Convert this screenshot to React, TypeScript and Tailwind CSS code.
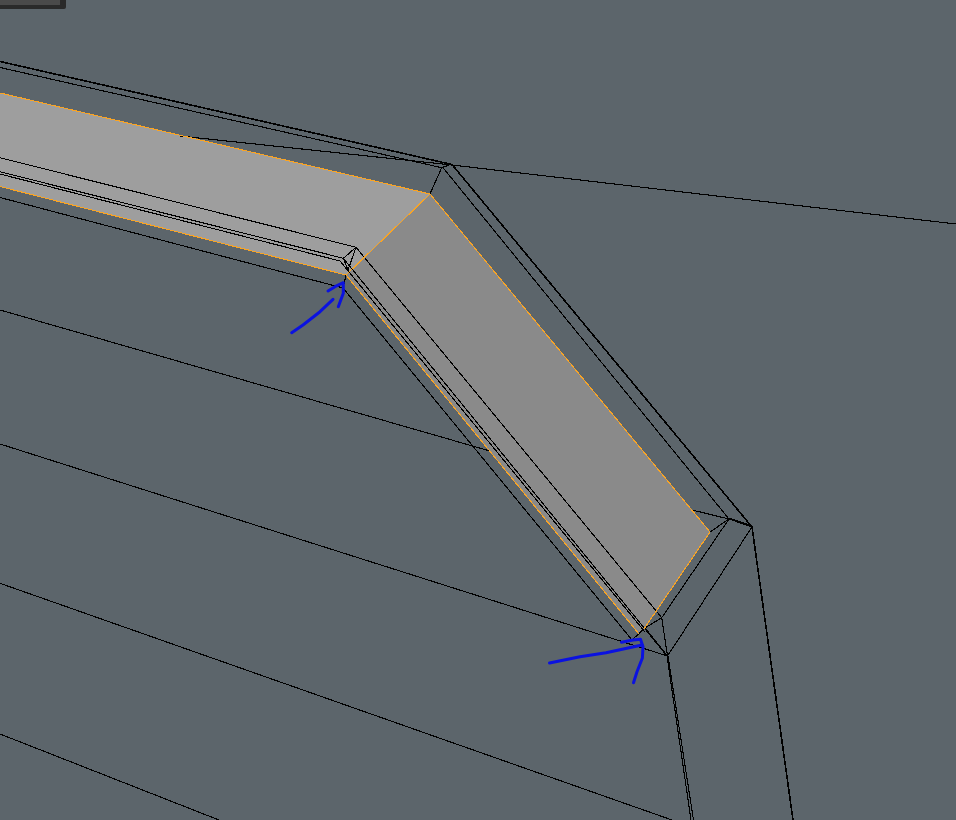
const thin: number[][] = [
  // top edge loop
  [0, 67.5, 441.7, 167.7],
  [180, 136, 452, 165],
  [452, 165, 956, 224],
  [441.7, 167.7, 452, 164],
  [441.7, 167.7, 430, 194],
  [443, 167.7, 729, 519],
  // strip inner lines
  [0, 157.7, 356, 247.3],
  [0, 171.7, 343.3, 258.3],
  [0, 174, 340, 261],
  [0, 197.5, 343, 288],
  [343, 288, 632, 640],
  [356, 247.3, 343.3, 258.3],
  [356, 247.3, 348, 270],
  [343.3, 258.3, 348, 270],
  [346, 275, 343, 288],
  // inner lines of the second segment
  [356, 247.3, 661.7, 617.7],
  [343.3, 258.3, 667, 656],
  [340, 261, 645, 632],
  // far corner
  [692, 510, 729, 519],
  [729, 519, 752, 527],
  [729, 518, 752, 526],
  [729, 519, 710, 532],
  [729, 519, 661.7, 617.7],
  [661.7, 617.7, 667.5, 656],
  [661.7, 617.7, 645, 628],
  [645, 628, 632, 640],
  [645, 628, 667.5, 656],
  [752, 527, 667.5, 656],
  [667, 656, 691, 820],
  [668, 656, 693.5, 820],
  // long edges running off the page
  [0, 310, 490, 451],
  [0, 444, 667.5, 656],
  [0, 583.3, 672, 820],
  [0, 734, 219, 820],
];

const thick: number[][] = [
  [0, 61.5, 452, 164.5],
  [452, 164.5, 752, 527],
  [752, 527, 793, 820],
];

const orange: number[][] = [
  [0, 93, 430, 194],
  [0, 186.5, 346, 275],
  [430, 194, 346, 275],
  [430, 194, 710, 532],
  [710, 532, 644, 629],
  [346, 275, 639, 634],
];

const arrows = [
  "M291.7 332.7 L303 325 L320 311.7 L333 299.3",
  "M328 291 L335 286.7 L343.3 282.7 L343.3 293.3 L338.3 306.7",
  "M549.5 663 L580 656.7 L606 652.7 L642 645",
  "M621.5 642.3 L633 640 L640.5 639.3 L643 646.7 L642.4 658 L637 671.7 L633.5 682.7",
];

function Edges({ lines, color, width }: { lines: number[][]; color: string; width: number }) {
  return (
    <g stroke={color} strokeWidth={width} shapeRendering="crispEdges">
      {lines.map((l, i) => (
        <line key={i} x1={l[0]} y1={l[1]} x2={l[2]} y2={l[3]} />
      ))}
    </g>
  );
}

export default function App() {
  return (
    <div className="relative h-[820px] w-full overflow-hidden bg-[#5c656b]">
      <svg className="block h-full w-full" viewBox="0 0 956 820">
        <polygon points="0,93 430,194 346,275 0,186.5" fill="#9e9e9e" shapeRendering="crispEdges" />
        <polygon points="430,194 710,532 644,629 639,634 346,275" fill="#8a8a8a" shapeRendering="crispEdges" />
        <Edges lines={thin} color="#000000" width={1.1} />
        <Edges lines={thick} color="#000000" width={1.6} />
        <Edges lines={orange} color="#f9a425" width={1.1} />
        <g fill="none" stroke="#0b12e0" strokeWidth={3} strokeLinecap="round" strokeLinejoin="round">
          {arrows.map((d) => (
            <path key={d} d={d} />
          ))}
        </g>
      </svg>
      <div className="absolute left-0 top-0 h-[9px] w-[66px] rounded-br-[2px] bg-[#2a2a2a]">
        <div className="h-[5px] w-[60px] bg-[#4a4a4a]" />
      </div>
    </div>
  );
}
